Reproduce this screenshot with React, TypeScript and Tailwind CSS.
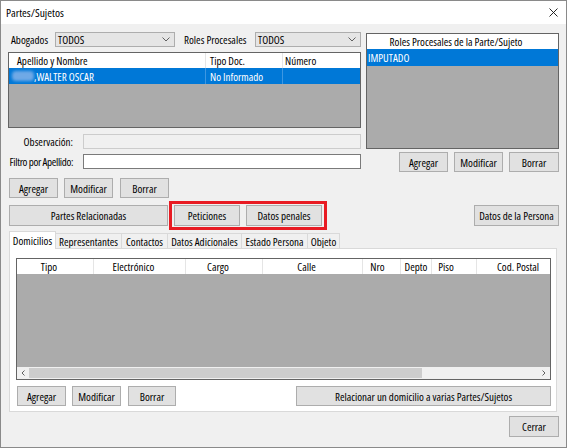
import React from "react";

const FONT = "font-['Open_Sans',sans-serif] font-stretch-condensed";

const Btn = ({ className = "", children }: { className?: string; children: React.ReactNode }) => (
  <div
    className={`flex items-center justify-center bg-[#e1e1e1] border border-[#adadad] text-[11px] leading-none text-black whitespace-nowrap shrink-0 ${className}`}
  >
    {children}
  </div>
);

const Combo = ({ className = "", value }: { className?: string; value: string }) => (
  <div
    className={`flex items-center justify-between bg-[#e5e5e5] border border-[#adadad] h-[15px] pl-[2px] pr-[4px] text-[11px] leading-none ${className}`}
  >
    <span>{value}</span>
    <svg width="8" height="5" viewBox="0 0 8 5">
      <path d="M0.5 0.5 L4 4 L7.5 0.5" fill="none" stroke="#606060" strokeWidth="1" />
    </svg>
  </div>
);

const Tab = ({ label, className = "", selected = false }: { label: string; className?: string; selected?: boolean }) =>
  selected ? (
    <div
      className={`h-[18px] bg-white border border-b-0 border-[#d9d9d9] flex items-start justify-center pt-[3px] text-[11px] leading-none -mb-px relative z-10 whitespace-nowrap ${className}`}
    >
      {label}
    </div>
  ) : (
    <div
      className={`h-[15px] bg-[#f0f0f0] border border-b-0 border-l-0 border-[#d9d9d9] flex items-center justify-center text-[11px] leading-none whitespace-nowrap ${className}`}
    >
      {label}
    </div>
  );

export default function App() {
  return (
    <div
      className={`w-[567px] h-[448px] border border-[#8a8a8a] bg-[#f0f0f0] flex flex-col overflow-hidden text-black ${FONT}`}
    >
      {/* Title bar */}
      <div className="h-[23px] bg-white flex items-center justify-between pl-[5px] pr-[8px] shrink-0">
        <span className="text-[11.5px] leading-none">Partes/Sujetos</span>
        <svg width="9" height="9" viewBox="0 0 9 9">
          <path d="M0.5 0.5 L8.5 8.5 M8.5 0.5 L0.5 8.5" stroke="#111" strokeWidth="0.9" fill="none" />
        </svg>
      </div>

      <div className="flex flex-col pl-[7px] pr-[7px]">
        {/* Top section */}
        <div className="flex mt-[8px] gap-[5px]">
          {/* Left column */}
          <div className="w-[353px] flex flex-col">
            <div className="flex h-[15px] items-center text-[11px] leading-none whitespace-nowrap">
              <div className="w-[47px] pl-[3px]">Abogados</div>
              <Combo className="w-[120px]" value="TODOS" />
              <div className="w-[80px] pl-[9px]">Roles Procesales</div>
              <Combo className="flex-1" value="TODOS" />
            </div>

            <div className="mt-[5px] h-[76px] border border-[#646464] bg-[#ababab] flex flex-col text-[11px] leading-none whitespace-nowrap">
              <div className="h-[15px] bg-white flex shrink-0">
                <div className="w-[197px] pl-[8px] border-r border-[#e5e5e5] flex items-center">Apellido y Nombre</div>
                <div className="w-[77px] pl-[4px] border-r border-[#e5e5e5] flex items-center">Tipo Doc.</div>
                <div className="flex-1 pl-[2px] flex items-center">Número</div>
              </div>
              <div className="h-[16px] bg-[#0078d7] text-white flex shrink-0">
                <div className="w-[197px] pl-[3px] border-r border-[#3d97e2] flex items-center">
                  <span className="inline-block w-[22px] h-[10px] bg-[#6fa9e6] blur-[1.5px] rounded-sm" />
                  <span>,WALTER OSCAR</span>
                </div>
                <div className="w-[77px] pl-[4px] border-r border-[#3d97e2] flex items-center">No Informado</div>
                <div className="flex-1" />
              </div>
            </div>

            <div className="mt-[6px] h-[15px] flex items-center text-[11px] leading-none whitespace-nowrap">
              <div className="w-[65px] text-right">Observación:</div>
              <div className="ml-[10px] flex-1 h-full bg-[#f0f0f0] border border-[#cccccc]" />
            </div>
            <div className="mt-[5px] h-[15px] flex items-center text-[11px] leading-none whitespace-nowrap">
              <div className="w-[65px] flex justify-end tracking-[-0.35px]">Filtro por Apellido:</div>
              <div className="ml-[10px] flex-1 h-full bg-white border border-[#7a7a7a]" />
            </div>

            <div className="mt-[9px] flex gap-[6px] pl-[1px]">
              <Btn className="w-[49px] h-[20px]">Agregar</Btn>
              <Btn className="w-[49px] h-[20px]">Modificar</Btn>
              <Btn className="w-[49px] h-[20px] ml-[1px]">Borrar</Btn>
            </div>
          </div>

          {/* Right column */}
          <div className="w-[193px] flex flex-col">
            <div className="mt-[1px] h-[116px] border border-[#646464] bg-[#ababab] flex flex-col text-[11px] leading-none whitespace-nowrap">
              <div className="h-[15px] bg-white flex items-center shrink-0">
                <div className="w-[178px] text-center">Roles Procesales de la Parte/Sujeto</div>
              </div>
              <div className="h-[17px] bg-[#0078d7] text-white flex items-center pl-[1px] shrink-0">IMPUTADO</div>
            </div>
            <div className="mt-[3px] flex justify-end gap-[6px]">
              <Btn className="w-[49px] h-[20px]">Agregar</Btn>
              <Btn className="w-[49px] h-[20px]">Modificar</Btn>
              <Btn className="w-[50px] h-[20px]">Borrar</Btn>
            </div>
          </div>
        </div>

        {/* Action row */}
        <div className="mt-[7px] h-[21px] flex items-center">
          <Btn className="ml-[1px] w-[159px] h-[21px]">Partes Relacionadas</Btn>
          <div className="ml-[1px] -my-[4px] border-[3px] border-[#e81b23] px-[2px] py-[1px] flex gap-[6px]">
            <Btn className="w-[66px] h-[21px]">Peticiones</Btn>
            <Btn className="w-[76px] h-[21px]">Datos penales</Btn>
          </div>
          <Btn className="ml-auto w-[85px] h-[21px]">Datos de la Persona</Btn>
        </div>

        {/* Tabs */}
        <div className="mt-[4px] flex items-end h-[18px] pl-[1px]">
          <Tab selected label="Domicilios" className="w-[47px]" />
          <Tab label="Representantes" className="w-[66px]" />
          <Tab label="Contactos" className="w-[46px]" />
          <Tab label="Datos Adicionales" className="w-[74px]" />
          <Tab label="Estado Persona" className="w-[66px]" />
          <Tab label="Objeto" className="w-[32px]" />
        </div>

        {/* Tab panel */}
        <div className="ml-[1px] mr-[2px] h-[164px] bg-white border border-[#d9d9d9] flex flex-col pt-[9px] pl-[6px] pr-[5px]">
          <div className="h-[122px] border border-[#646464] bg-[#ababab] flex flex-col text-[11px] leading-none whitespace-nowrap">
            <div className="h-[15px] bg-white flex shrink-0 overflow-hidden">
              <div className="w-[77px] shrink-0 border-r border-[#e5e5e5] flex items-center justify-center pr-[12px]">Tipo</div>
              <div className="w-[92px] shrink-0 border-r border-[#e5e5e5] flex items-center justify-center pr-[12px]">Electrónico</div>
              <div className="w-[77px] shrink-0 border-r border-[#e5e5e5] flex items-center justify-center pr-[12px]">Cargo</div>
              <div className="w-[100px] shrink-0 border-r border-[#e5e5e5] flex items-center justify-center pr-[12px]">Calle</div>
              <div className="w-[38px] shrink-0 border-r border-[#e5e5e5] flex items-center justify-center pr-[8px]">Nro</div>
              <div className="w-[31px] shrink-0 border-r border-[#e5e5e5] flex items-center justify-center">Depto</div>
              <div className="w-[45px] shrink-0 border-r border-[#e5e5e5] flex items-center justify-center pr-[16px]">Piso</div>
              <div className="w-[90px] shrink-0 flex items-center justify-center pr-[8px]">Cod. Postal</div>
            </div>
            <div className="flex-1" />
            <div className="h-[12px] bg-[#f0f0f0] flex items-center shrink-0">
              <div className="w-[12px] h-full flex items-center justify-center">
                <svg width="4" height="6" viewBox="0 0 4 6">
                  <path d="M3.5 0.5 L1 3 L3.5 5.5" fill="none" stroke="#606060" strokeWidth="1" />
                </svg>
              </div>
              <div className="w-[393px] h-[10px] bg-[#cdcdcd]" />
              <div className="flex-1" />
              <div className="w-[12px] h-full flex items-center justify-center">
                <svg width="4" height="6" viewBox="0 0 4 6">
                  <path d="M0.5 0.5 L3 3 L0.5 5.5" fill="none" stroke="#606060" strokeWidth="1" />
                </svg>
              </div>
            </div>
          </div>
          <div className="mt-[6px] flex gap-[6px] pl-[1px]">
            <Btn className="w-[49px] h-[20px]">Agregar</Btn>
            <Btn className="w-[49px] h-[20px]">Modificar</Btn>
            <Btn className="w-[48px] h-[20px] ml-[1px]">Borrar</Btn>
            <Btn className="ml-auto w-[255px] h-[20px]">Relacionar un domicilio a varias Partes/Sujetos</Btn>
          </div>
        </div>

        <div className="mt-[4px] flex justify-end">
          <Btn className="w-[50px] h-[21px]">Cerrar</Btn>
        </div>
      </div>
    </div>
  );
}
